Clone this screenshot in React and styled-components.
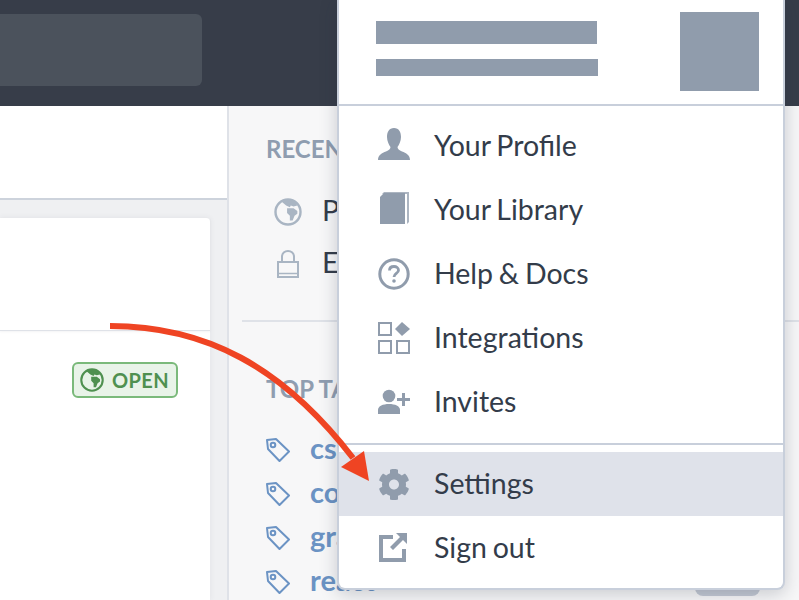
import React from "react";
import styled, { createGlobalStyle } from "styled-components";
import { FaCog } from "react-icons/fa";

const Global = createGlobalStyle`
  html, body { margin: 0; padding: 0; background: #fff; }
  body { font-family: Lato, "Open Sans", sans-serif; }
`;

const Page = styled.div`
  position: relative;
  width: 799px;
  height: 600px;
  overflow: hidden;
  display: flex;
  flex-direction: column;
`;

const Header = styled.header`
  flex: none;
  height: 106px;
  box-sizing: border-box;
  padding-top: 14px;
  background: #373d49;
`;
const Search = styled.div`
  width: 202px;
  height: 72px;
  background: #4b525c;
  border-radius: 0 6px 6px 0;
`;

const Body = styled.div`
  flex: 1;
  display: flex;
  min-height: 0;
`;
const Main = styled.main`
  flex: none;
  width: 227px;
  display: flex;
  flex-direction: column;
  background: #eff0f2;
`;
const Toolbar = styled.div`
  flex: none;
  height: 92px;
  background: #fff;
  border-bottom: 2px solid #cdd3dc;
`;
const Card = styled.section`
  flex: 1;
  width: 210px;
  margin-top: 18px;
  background: #fff;
  border-radius: 0 4px 0 0;
  box-shadow: 0 0 6px rgba(60, 70, 90, 0.08);
`;
const CardHead = styled.div`
  height: 112px;
  border-bottom: 1px solid #dfe2e8;
  box-shadow: 0 1px 2px rgba(60, 70, 90, 0.06);
`;
const CardRow = styled.div`
  display: flex;
  justify-content: flex-end;
  padding: 31px 32px 0 0;
`;
const Badge = styled.span`
  display: flex;
  align-items: center;
  gap: 8px;
  width: 106px;
  height: 36px;
  box-sizing: border-box;
  padding-left: 6px;
  background: #e8f3e8;
  border: 2px solid #7ab97a;
  border-radius: 6px;
  color: #4f9050;
  font-size: 20px;
  font-weight: 700;
  letter-spacing: 0.4px;
`;

const Sidebar = styled.aside`
  flex: 1;
  box-sizing: border-box;
  padding-top: 29px;
  background: #f7f7f8;
  border-left: 2px solid #dfe2e8;
`;
const Block = styled.div`
  padding: 0 39px 0 37px;
`;
const Heading = styled.h3`
  margin: 0;
  font-size: 24px;
  line-height: 28px;
  font-weight: 700;
  color: #8f9db0;
`;
const RecentList = styled.div`
  display: flex;
  flex-direction: column;
  gap: 12px;
  margin-top: 29px;
  padding-left: 8px;
`;
const RecentRow = styled.div`
  display: flex;
  align-items: center;
  gap: 20px;
  height: 40px;
  font-size: 29px;
  color: #333c4a;
`;
const RecentIcon = styled.span`
  flex: none;
  display: flex;
  justify-content: center;
  width: 28px;
`;
const RecentLabel = styled.span`
  margin-bottom: 5px;
`;
const Divider = styled.hr`
  margin: 36px 0 0 13px;
  border: 0;
  height: 2px;
  background: #dfe2e8;
`;
const TagHeading = styled(Heading)`
  margin-top: 53px;
`;
const TagList = styled.div`
  display: flex;
  flex-direction: column;
  gap: 4px;
  margin-top: 27px;
`;
const TagRow = styled.div`
  display: flex;
  align-items: center;
  height: 40px;
  font-size: 29px;
  font-weight: 700;
  color: #6b93c4;
`;
const TagName = styled.span`
  flex: 1;
  margin: 0 0 6px 20px;
`;
const Count = styled.span`
  align-self: flex-start;
  width: 65px;
  height: 28px;
  margin-top: 6px;
  border-radius: 8px;
  background: #c3c9d4;
`;

const Menu = styled.nav`
  position: absolute;
  z-index: 1;
  top: 0;
  left: 337px;
  width: 448px;
  height: 590px;
  box-sizing: border-box;
  background: #fff;
  border: 2px solid #c8cfdb;
  border-top: 0;
  border-radius: 0 0 8px 8px;
  box-shadow: 0 4px 18px rgba(30, 40, 60, 0.22);
`;
const MenuHead = styled.div`
  display: flex;
  justify-content: space-between;
  height: 106px;
  box-sizing: border-box;
  padding: 12px 24px 0 37px;
  border-bottom: 2px solid #c8cfdb;
`;
const Lines = styled.div`
  display: flex;
  flex-direction: column;
  gap: 15px;
  padding-top: 9px;
`;
const Line = styled.div`
  width: ${(p) => p.$w}px;
  height: ${(p) => p.$h}px;
  background: #909cac;
`;
const Avatar = styled.div`
  width: 79px;
  height: 79px;
  background: #909cac;
`;
const Section = styled.div`
  padding: ${(p) => p.$pad};
  border-bottom: ${(p) => (p.$line ? "2px solid #c8cfdb" : "0")};
`;
const Item = styled.a`
  display: flex;
  align-items: center;
  height: 64px;
  padding-left: 39px;
  background: ${(p) => (p.$active ? "#dfe2ea" : "transparent")};
  color: #333c4a;
  font-size: 28.5px;
  word-spacing: -1.5px;
`;
const ItemLabel = styled.span`
  margin-bottom: 2px;
`;
const IconBox = styled.span`
  flex: none;
  display: flex;
  align-items: center;
  justify-content: center;
  width: 32px;
  height: 32px;
  margin-right: 24px;
  color: #909cac;
`;
const Arrow = styled.svg`
  position: absolute;
  z-index: 2;
  top: 0;
  left: 0;
  pointer-events: none;
`;

const Globe = ({ size = 28, color = "#a9b5c3", sw = 2.6 }) => (
  <svg width={size} height={size} viewBox="0 0 30 30">
    <circle cx="15" cy="15" r="13.4" fill="none" stroke={color} strokeWidth={sw} />
    <path
      d="M7 3 C12 1 18 1 23 4 L25 8 L21 9 L18 8 L17 10 L13 8 Z M14 11 L21 11 L25 14 L25 17 L22 19 L20 24 L17 24 L17 19 L14 16 Z"
      fill={color}
    />
  </svg>
);

const Lock = () => (
  <svg width="22" height="28" viewBox="0 0 22 28" fill="none" stroke="#a9b5c3">
    <path d="M5 12 V6.5 a6 5.5 0 0 1 12 0 V12" strokeWidth="2" />
    <rect x="1" y="12" width="20" height="15" strokeWidth="2" />
    <path d="M1 23.5 H21" strokeWidth="1.5" />
  </svg>
);

const Tag = () => (
  <svg width="24" height="24" viewBox="0 0 24 24" fill="none" stroke="#6b93c4" strokeWidth="2" strokeLinejoin="round">
    <path d="M1 2 L10 1 L23 13.5 L13.5 23 L2 11 Z" />
    <circle cx="7" cy="7" r="2.3" />
  </svg>
);

const ProfileIcon = () => (
  <svg width="32" height="32" viewBox="0 2 32 32" fill="currentColor" overflow="visible">
    <path d="M16 0 C21 0 23 4 23 9 C23 13 21 17 19.5 19 C19.5 21 21 22 24 23.5 C28 25 32 27 32 32 H0 C0 27 4 25 8 23.5 C11 22 12.5 21 12.5 19 C11 17 9 13 9 9 C9 4 11 0 16 0 Z" />
  </svg>
);
const BookIcon = () => (
  <svg width="32" height="32" viewBox="0 2 32 32" fill="currentColor" overflow="visible">
    <path d="M2 5 L6 1 H27 V32 H2 Z" />
    <path d="M6 0 H31 V30 L29 32 V2 H4 Z" opacity="0.75" />
  </svg>
);
const HelpIcon = () => (
  <svg width="32" height="32" viewBox="0 0 32 32" fill="none" stroke="currentColor">
    <circle cx="16" cy="16" r="14.2" strokeWidth="3" />
    <path d="M11.5 12.5 C11.5 9.5 13.5 8.5 16 8.5 C18.5 8.5 20.5 10 20.5 12.3 C20.5 15.5 16 15.5 16 19" strokeWidth="2.8" />
    <circle cx="16" cy="23" r="1.8" fill="currentColor" stroke="none" />
  </svg>
);
const IntegrationsIcon = () => (
  <svg width="32" height="32" viewBox="0 0 32 32" fill="none" stroke="currentColor" strokeWidth="2">
    <rect x="1" y="1" width="12" height="12" />
    <rect x="1" y="19" width="12" height="12" />
    <rect x="19" y="19" width="12" height="12" />
    <path d="M24 0 L32 7 L24 14 L17 7 Z" fill="currentColor" stroke="none" />
  </svg>
);
const InvitesIcon = () => (
  <svg width="32" height="32" viewBox="0 0 32 32" fill="currentColor">
    <circle cx="11" cy="10" r="6.3" />
    <path d="M0 28 V24 C0 20 5 18 11 18 C17 18 22 20 22 24 V28 Z" />
    <path d="M24 7 H27 V12 H32 V15 H27 V20 H24 V15 H19 V12 H24 Z" />
  </svg>
);
const SignOutIcon = () => (
  <svg width="32" height="32" viewBox="0 0 32 32" fill="currentColor">
    <path d="M3 3 H15 V7 H5 V26 H24 V17 H28 V30 H1 V3 Z" />
    <path d="M18 1 H29 V12 L25 8 L15 18 L12 15 L22 5 Z" />
  </svg>
);

const recent = [
  { id: "public", icon: <Globe />, label: "Public" },
  { id: "encrypted", icon: <Lock />, label: "Encrypted" },
];
const tags = ["css", "code", "graphql", "react"];
const items = [
  { label: "Your Profile", icon: <ProfileIcon /> },
  { label: "Your Library", icon: <BookIcon /> },
  { label: "Help & Docs", icon: <HelpIcon /> },
  { label: "Integrations", icon: <IntegrationsIcon /> },
  { label: "Invites", icon: <InvitesIcon /> },
];

export default function App() {
  return (
    <Page>
      <Global />
      <Header>
        <Search />
      </Header>
      <Body>
        <Main>
          <Toolbar />
          <Card>
            <CardHead />
            <CardRow>
              <Badge>
                <Globe size={24} color="#4f9050" sw={2.6} />
                OPEN
              </Badge>
            </CardRow>
          </Card>
        </Main>
        <Sidebar>
          <Block>
            <Heading>RECENT</Heading>
            <RecentList>
              {recent.map((r) => (
                <RecentRow key={r.id}>
                  <RecentIcon>{r.icon}</RecentIcon>
                  <RecentLabel>{r.label}</RecentLabel>
                </RecentRow>
              ))}
            </RecentList>
          </Block>
          <Divider />
          <Block>
            <TagHeading>TOP TAGS</TagHeading>
            <TagList>
              {tags.map((t) => (
                <TagRow key={t}>
                  <Tag />
                  <TagName>{t}</TagName>
                  {t === "react" && <Count />}
                </TagRow>
              ))}
            </TagList>
          </Block>
        </Sidebar>
      </Body>
      <Menu>
        <MenuHead>
          <Lines>
            <Line $w={221} $h={23} />
            <Line $w={222} $h={17} />
          </Lines>
          <Avatar />
        </MenuHead>
        <Section $line $pad="8px 0 9px">
          {items.map((it) => (
            <Item key={it.label}>
              <IconBox>{it.icon}</IconBox>
              <ItemLabel>{it.label}</ItemLabel>
            </Item>
          ))}
        </Section>
        <Section $pad="7px 0 0">
          <Item $active>
            <IconBox>
              <FaCog size={33} />
            </IconBox>
            <ItemLabel>Settings</ItemLabel>
          </Item>
          <Item>
            <IconBox>
              <SignOutIcon />
            </IconBox>
            <ItemLabel>Sign out</ItemLabel>
          </Item>
        </Section>
      </Menu>
      <Arrow width="799" height="600" viewBox="0 0 799 600">
        <path d="M110 326 C205 326 282 366 353 458" fill="none" stroke="#ef4423" strokeWidth="6" />
        <path d="M369 481 L341 467 L364 451 Z" fill="#ef4423" />
      </Arrow>
    </Page>
  );
}
